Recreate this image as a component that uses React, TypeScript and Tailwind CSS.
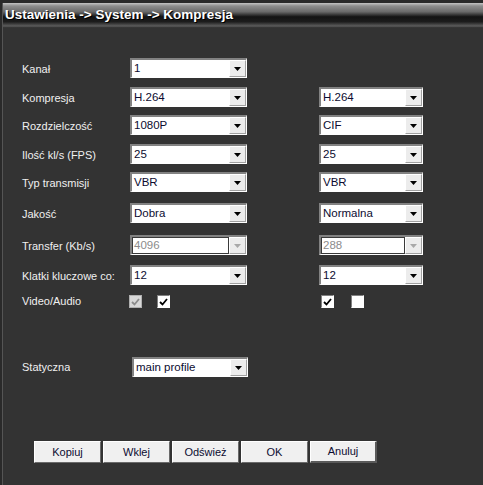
import React from "react";

const Arrow = ({ disabled }: { disabled?: boolean }) => (
  <svg width="7" height="4" viewBox="0 0 7 4">
    <polygon points="0,0 7,0 3.5,4" fill={disabled ? "#a8a8a8" : "#000"} />
  </svg>
);

function Select({ value, w, disabled }: { value: string; w: string; disabled?: boolean }) {
  return (
    <div
      className={`flex h-[20px] shrink-0 ${w} border-t-2 border-l-2 border-b border-r border-t-[#828282] border-l-[#828282] border-b-white border-r-white bg-white`}
    >
      {disabled ? (
        <div className="flex-1 border border-[#3a3a3a] pl-[1px] text-[11.5px] leading-[15px] text-[#8c8c8c]">
          {value}
        </div>
      ) : (
        <div className="flex-1 pl-[2px] text-[11.5px] leading-[17px] text-[#0c0c30]">{value}</div>
      )}
      <div className="flex w-[17px] items-center justify-center border-t border-l border-r border-b border-t-white border-l-white border-r-[#a0a0a0] border-b-[#a0a0a0] bg-[#ececec]">
        <Arrow disabled={disabled} />
      </div>
    </div>
  );
}

function Check({ checked, disabled }: { checked?: boolean; disabled?: boolean }) {
  return (
    <div
      className={`flex h-[13px] w-[13px] shrink-0 items-center justify-center border-t border-l border-b border-r ${
        disabled
          ? "border-[#b0b0b0] bg-[#d8d8d8]"
          : "border-t-[#808080] border-l-[#808080] border-b-white border-r-white bg-white"
      }`}
    >
      {checked && (
        <svg width="9" height="8" viewBox="0 0 9 8">
          <polyline
            points="1,4 3.5,6.5 8,1"
            fill="none"
            stroke={disabled ? "#8c8c8c" : "#000"}
            strokeWidth="1.8"
          />
        </svg>
      )}
    </div>
  );
}

function Row({
  label,
  left,
  right,
  mt,
  disabled,
}: {
  label: string;
  left: string;
  right?: string;
  mt: string;
  disabled?: boolean;
}) {
  return (
    <div className={`flex h-[20px] items-center ${mt}`}>
      <div className="w-[127px] shrink-0 whitespace-nowrap pl-[19px] pt-[2px] text-[11px] text-[#f0f0f0]">
        {label}
      </div>
      <Select value={left} w="w-[117px]" disabled={disabled} />
      {right !== undefined && (
        <div className="ml-[72px] shrink-0">
          <Select value={right} w="w-[104px]" disabled={disabled} />
        </div>
      )}
    </div>
  );
}

function Btn({ label, def }: { label: string; def?: boolean }) {
  return (
    <div
      className={`flex h-[22px] w-[67px] shrink-0 items-center justify-center border-t border-l border-t-white border-l-white bg-[#f0f0f0] text-[11px] text-[#0c0c30] ${
        def ? "border-b-2 border-r-2 border-b-[#5a5a5a] border-r-[#5a5a5a]" : "border-b border-r border-b-[#6a6a6a] border-r-[#6a6a6a]"
      }`}
    >
      {label}
    </div>
  );
}

export default function App() {
  return (
    <div
      className="h-[485px] w-[483px] overflow-hidden bg-[#2a2a2a] pl-[2px] pt-[3px]"
      style={{ fontFamily: '"Liberation Sans", Arial, sans-serif' }}
    >
      <div className="flex h-full flex-col border-l border-[#555]">
        <div className="flex h-[25px] shrink-0 items-center bg-[linear-gradient(to_bottom,#c4c4c4_0%,#8e8e8e_12%,#6a6a6a_35%,#141414_55%,#1c1c1c_75%,#5c5c5c_92%,#2a2a2a_100%)] pl-[2px]">
          <span className="text-[13.5px] font-bold text-white [text-shadow:1px_1px_0_#000]">
            Ustawienia -&gt; System -&gt; Kompresja
          </span>
        </div>
        <div className="flex-1 bg-[#333333] pt-[30px]">
          <Row label="Kanał" left="1" mt="mt-0" />
          <Row label="Kompresja" left="H.264" right="H.264" mt="mt-[9px]" />
          <Row label="Rozdzielczość" left="1080P" right="CIF" mt="mt-[8px]" />
          <Row label="Ilość kl/s (FPS)" left="25" right="25" mt="mt-[9px]" />
          <Row label="Typ transmisji" left="VBR" right="VBR" mt="mt-[8px]" />
          <Row label="Jakość" left="Dobra" right="Normalna" mt="mt-[11px]" />
          <Row label="Transfer (Kb/s)" left="4096" right="288" mt="mt-[12px]" disabled />
          <Row label="Klatki kluczowe co:" left="12" right="12" mt="mt-[10px]" />
          <div className="mt-[10px] flex h-[13px] items-center">
            <div className="w-[126px] shrink-0 pl-[19px] text-[11px] text-[#f0f0f0]">Video/Audio</div>
            <div className="flex shrink-0 gap-[15px]">
              <Check checked disabled />
              <Check checked />
            </div>
            <div className="ml-[151px] flex shrink-0 gap-[17px]">
              <Check checked />
              <Check />
            </div>
          </div>
          <div className="mt-[49px] flex h-[20px] items-center">
            <div className="w-[129px] shrink-0 pl-[19px] text-[11px] text-[#f0f0f0]">Statyczna</div>
            <Select value="main profile" w="w-[116px]" />
          </div>
          <div className="ml-[31px] mt-[64px] flex gap-[2px]">
            <Btn label="Kopiuj" />
            <Btn label="Wklej" />
            <Btn label="Odśwież" />
            <Btn label="OK" />
            <Btn label="Anuluj" def />
          </div>
        </div>
      </div>
    </div>
  );
}
